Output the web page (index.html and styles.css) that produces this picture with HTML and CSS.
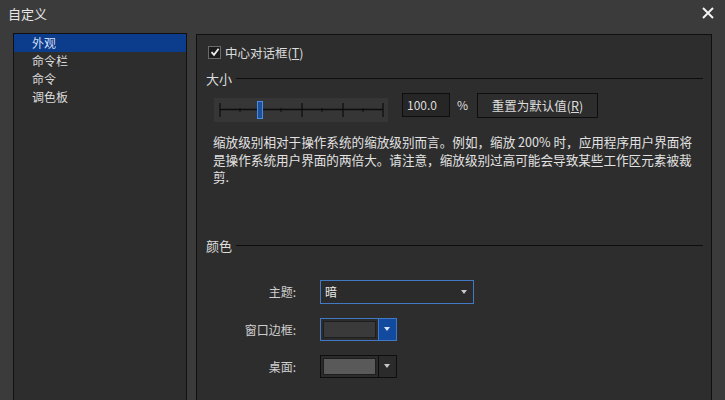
FILE: index.html
```html
<html>
    <head>
        <meta name="viewport" content="width=device-width, initial-scale=1">
        <title>自定义</title>
        <link rel="stylesheet" href="styles.css">
    </head>
    <body>
        <div class="titlebar">
            <span class="title">自定义</span>
            <svg class="close" width="12" height="12" viewBox="0 0 12 12">
                <path d="M1 1 L11 11 M11 1 L1 11" stroke="#f2f2f2" stroke-width="2" />
            </svg>
        </div>
        <div class="main">
            <div class="nav-list">
                <div class="nav-item active">外观</div>
                <div class="nav-item">命令栏</div>
                <div class="nav-item">命令</div>
                <div class="nav-item">调色板</div>
            </div>
            <div class="panel">
                <div class="check-row">
                    <span class="checkbox">
                        <svg width="10" height="10" viewBox="0 0 10 10">
                            <path d="M1.5 5.2 L4 7.8 L8.6 1.8" stroke="#f0f0f0" stroke-width="1.8" fill="none" />
                        </svg>
                    </span>
                    <span>中心对话框(<u>T</u>)</span>
                </div>

                <div class="group-title"><span>大小</span></div>
                <div class="size-row">
                    <svg class="slider" width="174" height="24" viewBox="0 0 174 24">
                        <rect x="0" y="0" width="174" height="24" fill="#363636" />
                        <line x1="6" y1="11.5" x2="169" y2="11.5" stroke="#0c0c0c" stroke-width="1.4" />
                        <line x1="6" y1="5" x2="6" y2="19" stroke="#0c0c0c" stroke-width="1.2" />
                        <line x1="88" y1="5" x2="88" y2="19" stroke="#0c0c0c" stroke-width="1.2" />
                        <line x1="129" y1="5" x2="129" y2="19" stroke="#0c0c0c" stroke-width="1.2" />
                        <line x1="169" y1="5" x2="169" y2="19" stroke="#0c0c0c" stroke-width="1.2" />
                        <line x1="26" y1="10" x2="26" y2="14" stroke="#0c0c0c" stroke-width="1" />
                        <line x1="67" y1="10" x2="67" y2="14" stroke="#0c0c0c" stroke-width="1" />
                        <line x1="108" y1="10" x2="108" y2="14" stroke="#0c0c0c" stroke-width="1" />
                        <line x1="149" y1="10" x2="149" y2="14" stroke="#0c0c0c" stroke-width="1" />
                        <rect x="43.5" y="3.5" width="5" height="17" fill="#1d4f9f" stroke="#4a8de6" stroke-width="1" />
                    </svg>
                    <div class="num-input">100.0</div>
                    <span class="unit">%</span>
                    <div class="btn">重置为默认值(<u>R</u>)</div>
                </div>
                <p class="desc">
                    缩放级别相对于操作系统的缩放级别而言。例如，缩放 200% 时，应用程序用户界面将<br>
                    是操作系统用户界面的两倍大。请注意，缩放级别过高可能会导致某些工作区元素被裁<br>
                    剪.
                </p>

                <div class="group-title color-title"><span>颜色</span></div>
                <div class="form-grid">
                    <label>主题:</label>
                    <div class="select">
                        <span>暗</span>
                        <span class="arrow"></span>
                    </div>

                    <label>窗口边框:</label>
                    <div class="combo focused">
                        <span class="swatch swatch-dark"></span>
                        <span class="combo-btn"><span class="arrow"></span></span>
                    </div>

                    <label>桌面:</label>
                    <div class="combo">
                        <span class="swatch swatch-gray"></span>
                        <span class="combo-btn"><span class="arrow"></span></span>
                    </div>
                </div>
            </div>
        </div>
    </body>
</html>
```

FILE: styles.css
```css
body {
    margin: 0;
    height: 100vh;
    display: flex;
    flex-direction: column;
    background: #3b3b3b;
    color: #dcdcdc;
    font-family: "Noto Sans CJK SC", "Noto Sans", sans-serif;
    font-size: 12px;
    overflow: hidden;
}
.titlebar {
    height: 26px;
    flex: none;
    display: flex;
    align-items: center;
    justify-content: space-between;
    padding: 0 11px 0 8px;
}
.title {
    font-size: 13px;
    color: #e6e6e6;
}
.close {
    display: block;
}
.main {
    flex: 1;
    min-height: 0;
    display: flex;
    gap: 9px;
    padding: 7px 13px 0 13px;
}
.nav-list {
    width: 172px;
    background: #2d2d2d;
    border: 1px solid #101010;
    border-bottom: none;
}
.nav-item {
    height: 18px;
    line-height: 18px;
    padding-left: 18px;
    color: #dcdcdc;
}
.nav-item.active {
    background: #0c3d8c;
    color: #cfdcf2;
}
.panel {
    flex: 1;
    background: #2d2d2d;
    border: 1px solid #101010;
    border-bottom: none;
    margin-top: 1px;
}
.check-row {
    display: flex;
    align-items: center;
    gap: 4px;
    padding-left: 11px;
    margin-top: 10px;
    height: 14px;
    font-size: 12.5px;
}
.checkbox {
    width: 11px;
    height: 11px;
    background: #1c1c1c;
    border: 1px solid #6a6a6a;
    display: flex;
    align-items: center;
    justify-content: center;
}
.group-title {
    display: flex;
    align-items: center;
    gap: 4px;
    padding: 0 8px 0 9px;
    margin-top: 10px;
    height: 18px;
    font-size: 13px;
    color: #dedede;
}
.group-title::after {
    content: "";
    flex: 1;
    height: 1px;
    background: #0d0d0d;
}
.size-row {
    display: flex;
    align-items: flex-start;
    padding-left: 17px;
    margin-top: 6px;
}
.slider {
    display: block;
    margin-top: 5px;
}
.num-input {
    width: 42px;
    height: 22px;
    line-height: 22px;
    margin-left: 14px;
    padding-left: 4px;
    background: #262626;
    border: 1px solid #0e0e0e;
    color: #dcdcdc;
}
.unit {
    line-height: 24px;
    margin-left: 7px;
    width: 20px;
}
.btn {
    width: 119px;
    height: 23px;
    line-height: 23px;
    text-align: center;
    background: #2d2d2d;
    border: 1px solid #0e0e0e;
    color: #dcdcdc;
    font-size: 12.5px;
}
.desc {
    margin: 11px 0 0 16px;
    font-size: 12.6px;
    line-height: 17.5px;
    color: #e2e2e2;
    white-space: nowrap;
}
.color-title {
    margin-top: 51px;
}
.form-grid {
    display: grid;
    grid-template-columns: 99px auto;
    grid-template-rows: 24px 23px 23px;
    column-gap: 24px;
    row-gap: 14px;
    margin-top: 25px;
    align-items: center;
}
.form-grid label {
    text-align: right;
    color: #cfcfcf;
}
.select {
    width: 148px;
    height: 22px;
    border: 1px solid #4179c2;
    background: #2b2b2b;
    display: flex;
    align-items: center;
    justify-content: space-between;
    padding: 0 0 0 4px;
    color: #ececec;
}
.select .arrow {
    margin-right: 6px;
}
.arrow {
    width: 0;
    height: 0;
    border-left: 3.5px solid transparent;
    border-right: 3.5px solid transparent;
    border-top: 4px solid #c8c8c8;
}
.combo {
    width: 75px;
    height: 21px;
    border: 1px solid #0e0e0e;
    display: flex;
    background: #2b2b2b;
}
.combo.focused {
    border-color: #4179c2;
}
.swatch {
    width: 52px;
    margin: 2px;
    border: 1px solid #1e1e1e;
}
.swatch-dark {
    background: #3a3a3a;
}
.swatch-gray {
    background: #595959;
}
.combo-btn {
    margin-left: auto;
    width: 18px;
    border-left: 1px solid #0e0e0e;
    display: flex;
    align-items: center;
    justify-content: center;
}
.combo.focused .combo-btn {
    background: #114a9e;
    border-left-color: #4179c2;
}
.combo.focused .arrow {
    border-top-color: #d8e4f6;
}
```
